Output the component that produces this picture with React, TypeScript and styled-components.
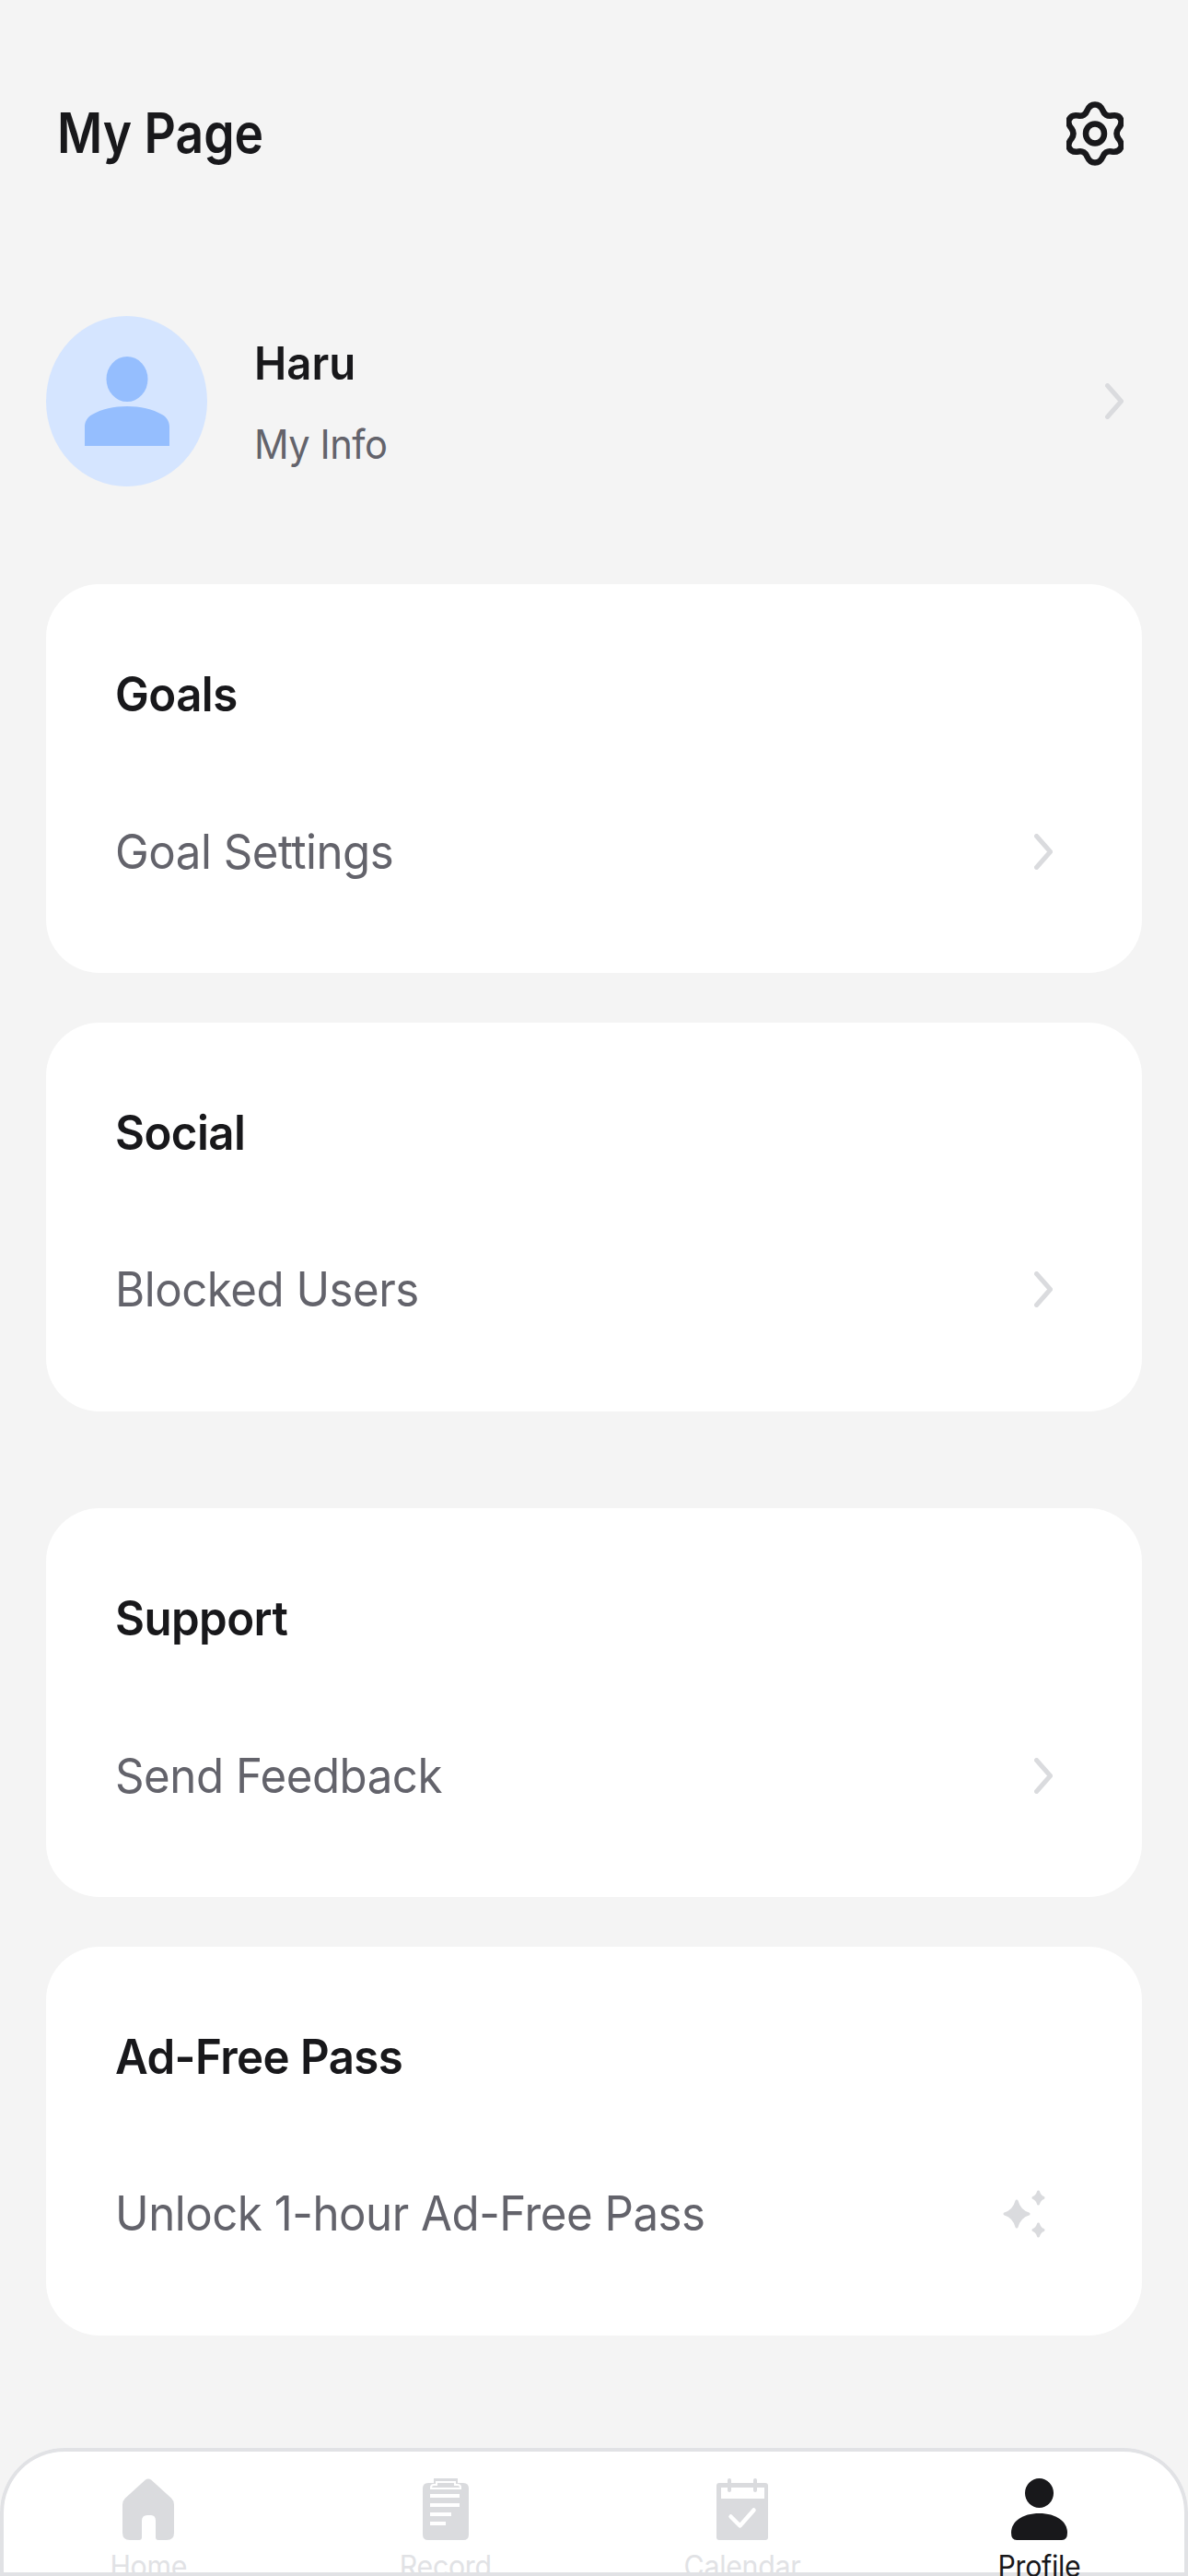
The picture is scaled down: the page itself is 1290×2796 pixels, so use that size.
import styled, { createGlobalStyle, css } from 'styled-components';

const GlobalStyle = createGlobalStyle`
  html, body {
    margin: 0;
    padding: 0;
    background: #f4f4f4;
  }
  body {
    font-family: Inter, "Noto Sans", sans-serif;
  }
`;

const narrow = css`
  transform: scaleX(0.946);
  transform-origin: left center;
`;

const Screen = styled.div`
  width: 1290px;
  height: 2796px;
  overflow: hidden;
  background: #f4f4f4;
`;

const Header = styled.header`
  height: 96px;
  padding: 97px 70px 0 62px;
  display: flex;
  align-items: center;
  justify-content: space-between;
`;

const PageTitle = styled.h1`
  transform: scaleX(0.89);
  transform-origin: left center;
  margin: 0 0 3px;
  font-size: 60px;
  font-weight: 600;
  letter-spacing: 0;
  color: #18181b;
`;

const ProfileRow = styled.section`
  margin-top: 150px;
  padding: 0 70px 0 50px;
  display: flex;
  align-items: center;
`;

const Avatar = styled.div`
  width: 175px;
  height: 185px;
  border-radius: 50%;
  background: #d5e5ff;
  display: flex;
  align-items: center;
  justify-content: center;
  flex-shrink: 0;
`;

const ProfileText = styled.div`
  margin-left: 51px;
  flex: 1;
  display: flex;
  flex-direction: column;
  gap: 32px;
`;

const ProfileName = styled.div`
  ${narrow}
  font-size: 50px;
  line-height: 60px;
  font-weight: 600;
  letter-spacing: 0;
  color: #18181b;
`;

const ProfileSub = styled.div`
  ${narrow}
  font-size: 44px;
  line-height: 52px;
  font-weight: 400;
  letter-spacing: -0.5px;
  color: #63636b;
`;

const Group = styled.div`
  margin: 105.5px 50px 0;
  display: flex;
  flex-direction: column;
  gap: 53.5px;

  &:first-of-type {
    margin-top: 106px;
  }
`;

const Card = styled.section`
  height: 422px;
  box-sizing: border-box;
  padding: 90px 97px 0 75px;
  background: #fff;
  border-radius: 58px;
`;

const CardTitle = styled.h2`
  ${narrow}
  margin: 0;
  font-size: 52px;
  line-height: 60px;
  font-weight: 600;
  letter-spacing: -0.6px;
  color: #18181b;
`;

const Row = styled.div`
  margin-top: 110px;
  height: 60px;
  display: flex;
  align-items: center;
  justify-content: space-between;
`;

const RowLabel = styled.span`
  ${narrow}
  font-size: 52px;
  font-weight: 400;
  letter-spacing: -0.5px;
  color: #63636b;
`;

const SparkleSlot = styled.span`
  margin-right: 8px;
  display: flex;
`;

const TabBar = styled.nav`
  margin-top: 122.5px;
  height: 139px;
  background: #fff;
  box-shadow: inset 0 0 0 4px #e1e2e5;
  border-radius: 70px 70px 0 0;
  display: grid;
  grid-template-columns: repeat(4, 1fr);
`;

const Tab = styled.div`
  padding-top: 33px;
  display: flex;
  flex-direction: column;
  align-items: center;
`;

const TabLabel = styled.span<{ $active?: boolean }>`
  ${narrow}
  transform-origin: center;
  margin-top: 9px;
  font-size: 32px;
  line-height: 40px;
  letter-spacing: -0.3px;
  color: ${(p) => (p.$active ? '#18181b' : '#e1e2e5')};
`;

const GearIcon = () => (
  <svg width="62" height="70" viewBox="0 0 62 70" fill="none" stroke="#18181b" strokeWidth="6.500">
    <path d="M31 3.500c5 0 7 3 8.500 6.500 1.500 4 5 6.500 9.500 5.500 5-1 8.500 0 10 4s0 7-2.500 10c-2.500 3.500-2.500 7.500 0 11 2.500 3 4.500 6 2.500 10s-5 5-10 4c-4.500-1-8 1.500-9.500 5.500-1.500 3.500-3.500 6.500-8.500 6.500s-7-3-8.500-6.500c-1.500-4-5-6.500-9.500-5.500-5 1-8 0-10-4s0-7 2.500-10c2.500-3.500 2.500-7.500 0-11-2.500-3-4.500-6-2.500-10s5-5 10-4c4.500 1 8-1.500 9.500-5.500 1.500-3.500 3.500-6.500 8.500-6.500z" />
    <ellipse cx="31" cy="35" rx="10" ry="10.500" />
  </svg>
);

const AvatarIcon = () => (
  <svg width="92" height="97" viewBox="0 0 92 97" fill="#95befe">
    <ellipse cx="46" cy="24.500" rx="22.500" ry="24.500" />
    <path d="M0 97V76c0-4 2-10 8-13 10-6 24-9 38-9s28 3 38 9c6 3 8 9 8 13v21z" />
  </svg>
);

const Chevron = () => (
  <svg width="20" height="39" viewBox="0 0 20 39" fill="none" stroke="#dadbde" strokeWidth="5" strokeLinecap="round" strokeLinejoin="round">
    <path d="M2.500 2.500l15 17-15 17" />
  </svg>
);

const Sparkles = () => (
  <svg width="46" height="52" viewBox="0 0 46 52" fill="#dadbde" stroke="#dadbde" strokeWidth="3" strokeLinejoin="round">
    <path d="M15 12q3 11 13 14-10 3-13 14-3-11-13-14 10-3 13-14z" />
    <path d="M38.500 2q1.500 5 5.500 6.500-4 1.500-5.500 6.500-1.500-5-5.500-6.500 4-1.500 5.500-6.500z" />
    <path d="M38.500 37q1.500 5 5.500 6.500-4 1.500-5.500 6.500-1.500-5-5.500-6.500 4-1.500 5.500-6.500z" />
  </svg>
);

const HomeIcon = () => (
  <svg width="56" height="67" viewBox="0 0 56 67" fill="#dadbde">
    <path d="M25 1.500q3-2 6 0l22 20q3 3 3 7V59q0 8-8 8h-9q-3 0-3-3V46q0-6-5-6h-4q-6 0-6 6v18q0 3-3 3H8q-8 0-8-8V28.500q0-4 3-7z" />
  </svg>
);

const RecordIcon = () => (
  <svg width="50" height="67" viewBox="0 0 50 67">
    <path d="M12 0h26v5h6q6 0 6 6v50q0 6-6 6H6q-6 0-6-6V11q0-6 6-6h6z" fill="#dadbde" />
    <path d="M9 11v-1q0-3 3-3h3V4h20v3h3q3 0 3 3v1z" fill="none" stroke="#fff" strokeWidth="2" />
    <path d="M8 17h32v4H8zM8 27h32v4H8zM8 37h23v4H8zM8 47h17v4H8z" fill="#fff" />
  </svg>
);

const CalendarIcon = () => (
  <svg width="56" height="67" viewBox="0 0 56 67">
    <path d="M3 5h50q3 0 3 3v56q0 3-3 3H3q-3 0-3-3V8q0-3 3-3z" fill="#dadbde" />
    <rect x="5" y="10" width="47" height="12" fill="#fff" />
    <rect x="12" y="0" width="4" height="15" rx="2" fill="#dadbde" />
    <rect x="40" y="0" width="4" height="15" rx="2" fill="#dadbde" />
    <path d="M15.500 41.500l10 10 15-17" fill="none" stroke="#fff" strokeWidth="4.500" strokeLinecap="round" strokeLinejoin="round" />
  </svg>
);

const ProfileIcon = () => (
  <svg width="61" height="67" viewBox="0 0 61 67" fill="#18181b">
    <ellipse cx="30.500" cy="16" rx="15.500" ry="16" />
    <path d="M0 59c0-12 12-21 30.500-21S61 47 61 59q0 8-6 8H6q-6 0-6-8z" />
  </svg>
);

const groups = [
  [
    { title: 'Goals', label: 'Goal Settings' },
    { title: 'Social', label: 'Blocked Users' },
  ],
  [
    { title: 'Support', label: 'Send Feedback' },
    { title: 'Ad-Free Pass', label: 'Unlock 1-hour Ad-Free Pass', sparkle: true },
  ],
];

const tabs = [
  { label: 'Home', icon: <HomeIcon /> },
  { label: 'Record', icon: <RecordIcon /> },
  { label: 'Calendar', icon: <CalendarIcon /> },
  { label: 'Profile', icon: <ProfileIcon />, active: true },
];

function App() {
  return (
    <Screen>
      <GlobalStyle />
      <Header>
        <PageTitle>My Page</PageTitle>
        <GearIcon />
      </Header>
      <ProfileRow>
        <Avatar>
          <AvatarIcon />
        </Avatar>
        <ProfileText>
          <ProfileName>Haru</ProfileName>
          <ProfileSub>My Info</ProfileSub>
        </ProfileText>
        <Chevron />
      </ProfileRow>
      {groups.map((group) => (
        <Group key={group[0].title}>
          {group.map((item) => (
            <Card key={item.title}>
              <CardTitle>{item.title}</CardTitle>
              <Row>
                <RowLabel>{item.label}</RowLabel>
                {item.sparkle ? (
                  <SparkleSlot>
                    <Sparkles />
                  </SparkleSlot>
                ) : (
                  <Chevron />
                )}
              </Row>
            </Card>
          ))}
        </Group>
      ))}
      <TabBar>
        {tabs.map((tab) => (
          <Tab key={tab.label}>
            {tab.icon}
            <TabLabel $active={tab.active}>{tab.label}</TabLabel>
          </Tab>
        ))}
      </TabBar>
    </Screen>
  );
}

export default App;
